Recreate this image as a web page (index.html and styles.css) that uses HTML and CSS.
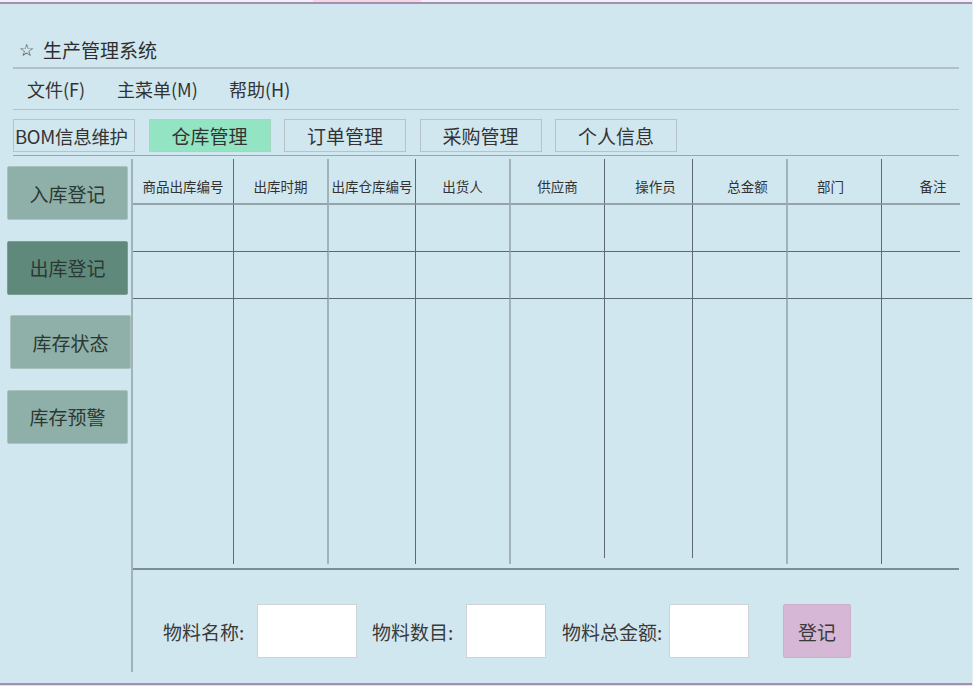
FILE: index.html
```html
<!DOCTYPE html>
<html lang="zh-CN">
<head>
<meta charset="utf-8">
<title>生产管理系统</title>
<link rel="stylesheet" href="styles.css">
</head>
<body>
<div class="page">
  <div class="topstrip"><span class="pink"></span></div>
  <div class="purple"></div>
  <div class="head">
    <div class="title"><span class="star">☆</span>生产管理系统</div>
    <div class="menubar">
      <span class="menu m1">文件(F)</span>
      <span class="menu m2">主菜单(M)</span>
      <span class="menu">帮助(H)</span>
    </div>
    <div class="tabs">
      <div class="tab">BOM信息维护</div>
      <div class="tab active">仓库管理</div>
      <div class="tab">订单管理</div>
      <div class="tab">采购管理</div>
      <div class="tab">个人信息</div>
    </div>
  </div>
  <div class="main">
    <div class="sidebar">
      <div class="sbtn">入库登记</div>
      <div class="sbtn dark">出库登记</div>
      <div class="sbtn shift">库存状态</div>
      <div class="sbtn">库存预警</div>
    </div>
    <div class="content">
      <div class="grid">
        <div class="c hd">商品出库编号</div>
        <div class="c hd lt">出库时期</div>
        <div class="c hd">出库仓库编号</div>
        <div class="c hd lt">出货人</div>
        <div class="c hd">供应商</div>
        <div class="c hd r1">操作员</div>
        <div class="c hd lt r2">总金额</div>
        <div class="c hd r4">部门</div>
        <div class="c hd last r3">备注</div>

        <div class="c row"></div><div class="c row lt"></div><div class="c row"></div><div class="c row lt"></div><div class="c row"></div><div class="c row"></div><div class="c row lt"></div><div class="c row"></div><div class="c row last"></div>
        <div class="c row"></div><div class="c row lt"></div><div class="c row"></div><div class="c row lt"></div><div class="c row"></div><div class="c row"></div><div class="c row lt"></div><div class="c row"></div><div class="c row last ext"></div>
        <div class="c body"></div><div class="c body lt"></div><div class="c body"></div><div class="c body lt"></div><div class="c body short"></div><div class="c body short"></div><div class="c body lt"></div><div class="c body"></div><div class="c body last"></div>
      </div>
      <div class="sep"></div>
      <div class="form">
        <label class="lbl l1">物料名称:</label>
        <input class="inp w1" type="text">
        <label class="lbl l2">物料数目:</label>
        <input class="inp w2" type="text">
        <label class="lbl l3">物料总金额:</label>
        <input class="inp w2" type="text">
        <button class="submit">登记</button>
      </div>
    </div>
  </div>
  <div class="spacer"></div>
  <div class="purple"></div>
</div>
</body>
</html>
```

FILE: styles.css
```css
* { box-sizing: border-box; }
html, body { margin: 0; padding: 0; }
body {
  background: #d1e7ef;
  font-family: "Noto Sans CJK SC", "Noto Sans", sans-serif;
  color: #333;
  overflow: hidden;
}
.page {
  width: 973px;
  height: 686px;
  display: flex;
  flex-direction: column;
  border-right: 1px solid #e4eef2;
}
.topstrip {
  height: 2px;
  background: #eef2f6;
  display: flex;
}
.pink {
  width: 108px;
  margin-left: 313px;
  background: #f2d8de;
}
.purple {
  height: 2px;
  background: #a68db6;
}
.head {
  padding: 0 13px;
}
.title {
  height: 65px;
  padding: 29px 0 0 6px;
  line-height: 24px;
  font-size: 19px;
  border-bottom: 2px solid #b2c0c6;
  color: #2e2e2e;
  display: flex;
  align-items: center;
}
.star {
  font-family: "DejaVu Sans", sans-serif;
  font-size: 17px;
  width: 24px;
  color: #333;
}
.menubar {
  height: 41px;
  display: flex;
  align-items: center;
  padding-left: 14px;
  border-bottom: 1px solid #b4c1c7;
  font-size: 18px;
}
.menu { white-space: nowrap; }
.m1 { width: 90px; }
.m2 { width: 112px; }
.tabs {
  display: flex;
  gap: 13.5px;
  padding: 9px 0 3px 0;
  border-bottom: 1px solid #97a7ae;
}
.tab {
  width: 122px;
  height: 33px;
  border: 1px solid #b9c3c7;
  display: flex;
  align-items: center;
  justify-content: center;
  font-size: 19px;
  color: #333;
  white-space: nowrap;
  overflow: hidden;
}
.tab:first-child { justify-content: flex-start; padding-left: 1px; font-size: 18.5px; letter-spacing: -0.3px; }
.tab.active {
  background: #93e4c2;
  border-color: #a6d6bf;
}
.main {
  display: flex;
  height: 516px;
}
.sidebar {
  width: 131px;
  padding: 10px 0 0 7px;
  display: flex;
  flex-direction: column;
  gap: 20.5px;
}
.sbtn {
  width: 121px;
  height: 54px;
  background: #8fb0a8;
  border: 1px solid #a9c2bc;
  border-radius: 2px;
  display: flex;
  align-items: center;
  justify-content: center;
  font-size: 19px;
  color: #2c3833;
}
.sbtn.dark { background: #5f8a7b; border-color: #7c9d92; }
.sbtn.shift { margin-left: 3px; }
.content {
  margin-top: 3px;
  width: 829px;
  border-left: 2px solid #a3b2b9;
  display: flex;
  flex-direction: column;
}
.grid {
  display: grid;
  grid-template-columns: 101px 95px 87px 95px 94px 88px 95px 94px 78px;
  grid-template-rows: 46px 47px 47px 265px;
}
.c {
  border-right: 1px solid #5f6b72;
}
.c.lt { border-right: 2px solid #a2b2b9; }
.c.last { border-right: none; }
.hd {
  border-bottom: 2px solid #95a4ab;
  font-size: 13.5px;
  color: #333;
  display: flex;
  align-items: center;
  justify-content: center;
  padding-top: 10px;
  white-space: nowrap;
}
.hd.r1 { padding-left: 14px; }
.hd.r2 { padding-left: 16px; }
.hd.r4 { padding-right: 8px; }
.hd.r3 { padding-left: 24px; }
.row { border-bottom: 1px solid #5d6a71; }
.row.ext { position: relative; }
.row.ext::after {
  content: "";
  position: absolute;
  left: 0;
  right: -12px;
  bottom: -1px;
  border-bottom: 1px solid #5d6a71;
}
.body.short { border-right-color: transparent; position: relative; }
.body.short::after {
  content: "";
  position: absolute;
  right: -1px;
  top: 0;
  height: 259px;
  border-right: 1px solid #5f6b72;
}
.sep {
  margin-top: 4px;
  height: 2px;
  width: 826px;
  background: #7d8d95;
}
.form {
  display: flex;
  align-items: center;
  padding: 34px 0 0 30px;
}
.lbl {
  font-size: 19px;
  color: #3a3a3a;
  white-space: nowrap;
}
.l1 { width: 94px; }
.l2 { width: 94px; margin-left: 15px; }
.l3 { width: 107px; margin-left: 16px; }
.inp {
  height: 54px;
  background: #fff;
  border: 1px solid #cfd3d5;
  outline: none;
  padding: 0;
  margin: 0;
}
.w1 { width: 100px; }
.w2 { width: 80px; }
.submit {
  margin-left: 34px;
  width: 68px;
  height: 54px;
  background: #d6b8d6;
  border: 1px solid #c9b0cb;
  border-radius: 2px;
  font-family: "Noto Sans CJK SC", sans-serif;
  font-size: 19px;
  color: #3a3a3a;
  padding: 0;
}
.spacer { height: 11px; }
```
